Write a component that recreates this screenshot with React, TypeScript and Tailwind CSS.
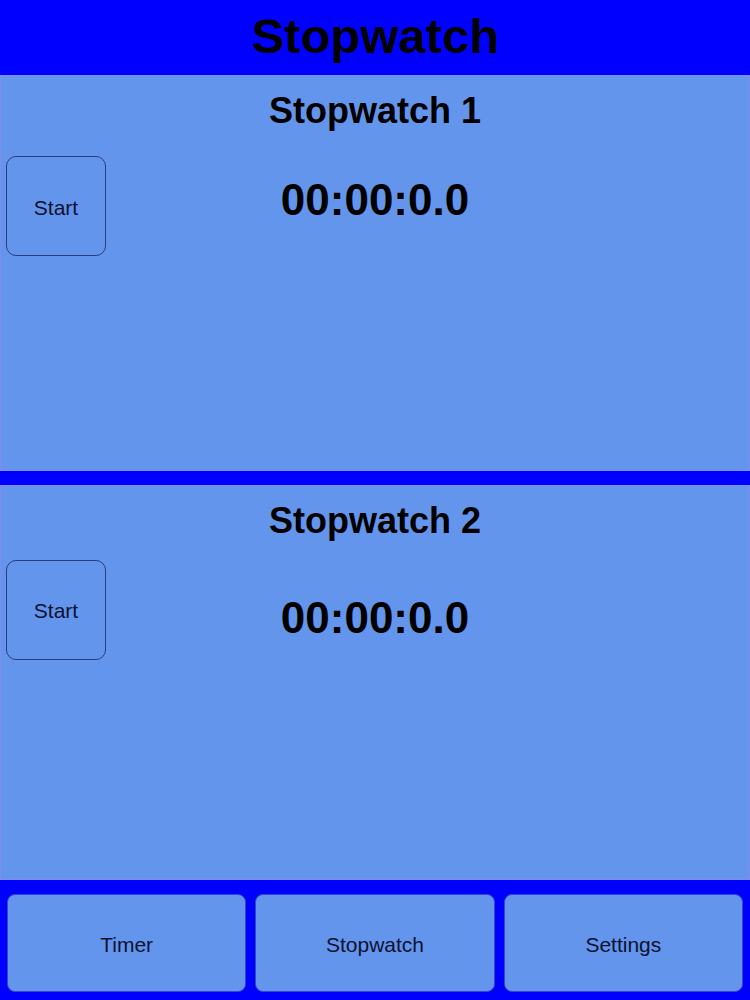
// App.tsx

const font = { fontFamily: '"Liberation Sans", Arial, sans-serif' };

function Panel({
  title,
  rowGap,
  timerTop,
}: {
  title: string;
  rowGap: string;
  timerTop: string;
}) {
  return (
    <section className="flex-1 flex flex-col bg-[#6495ed] border border-[#8589f2] pt-[17px]">
      <h2 className="text-center text-[36px] font-bold leading-none text-black">
        {title}
      </h2>
      <div className={`grid grid-cols-[1fr_auto_1fr] ${rowGap}`}>
        <div className="pl-[5px]">
          <button className="w-[100px] h-[100px] rounded-[10px] border border-[#2c3d7a] bg-[#6495ed] pt-[3px] text-[21px] text-[#0b1230]">
            Start
          </button>
        </div>
        <p className={`text-[44px] font-bold leading-none text-black ${timerTop}`}>
          00:00:0.0
        </p>
        <div />
      </div>
    </section>
  );
}

export default function App() {
  const tabs = ["Timer", "Stopwatch", "Settings"];

  return (
    <div className="w-[750px] h-[1000px] flex flex-col bg-[#0000ff]" style={font}>
      {/* ---- HEADER ---- */}
      <header className="h-[75px] shrink-0 flex items-center justify-center pb-[3px]">
        <h1 className="text-[49px] font-bold leading-none text-black">Stopwatch</h1>
      </header>

      {/* ---- PANELS ---- */}
      <div className="h-[805px] flex flex-col gap-[14px]">
        <Panel title="Stopwatch 1" rowGap="mt-[27px]" timerTop="mt-[22px]" />
        <Panel title="Stopwatch 2" rowGap="mt-[21px]" timerTop="mt-[36px]" />
      </div>

      {/* ---- TAB BAR ---- */}
      <nav className="flex-1 grid grid-cols-3 gap-[9px] px-[7px] pt-[14px] pb-[8px]">
        {tabs.map((t) => (
          <button
            key={t}
            className="rounded-[8px] border border-[#3548c8] bg-[#6495ed] pt-[3px] text-[21px] text-[#0b1230]"
          >
            {t}
          </button>
        ))}
      </nav>
    </div>
  );
}
